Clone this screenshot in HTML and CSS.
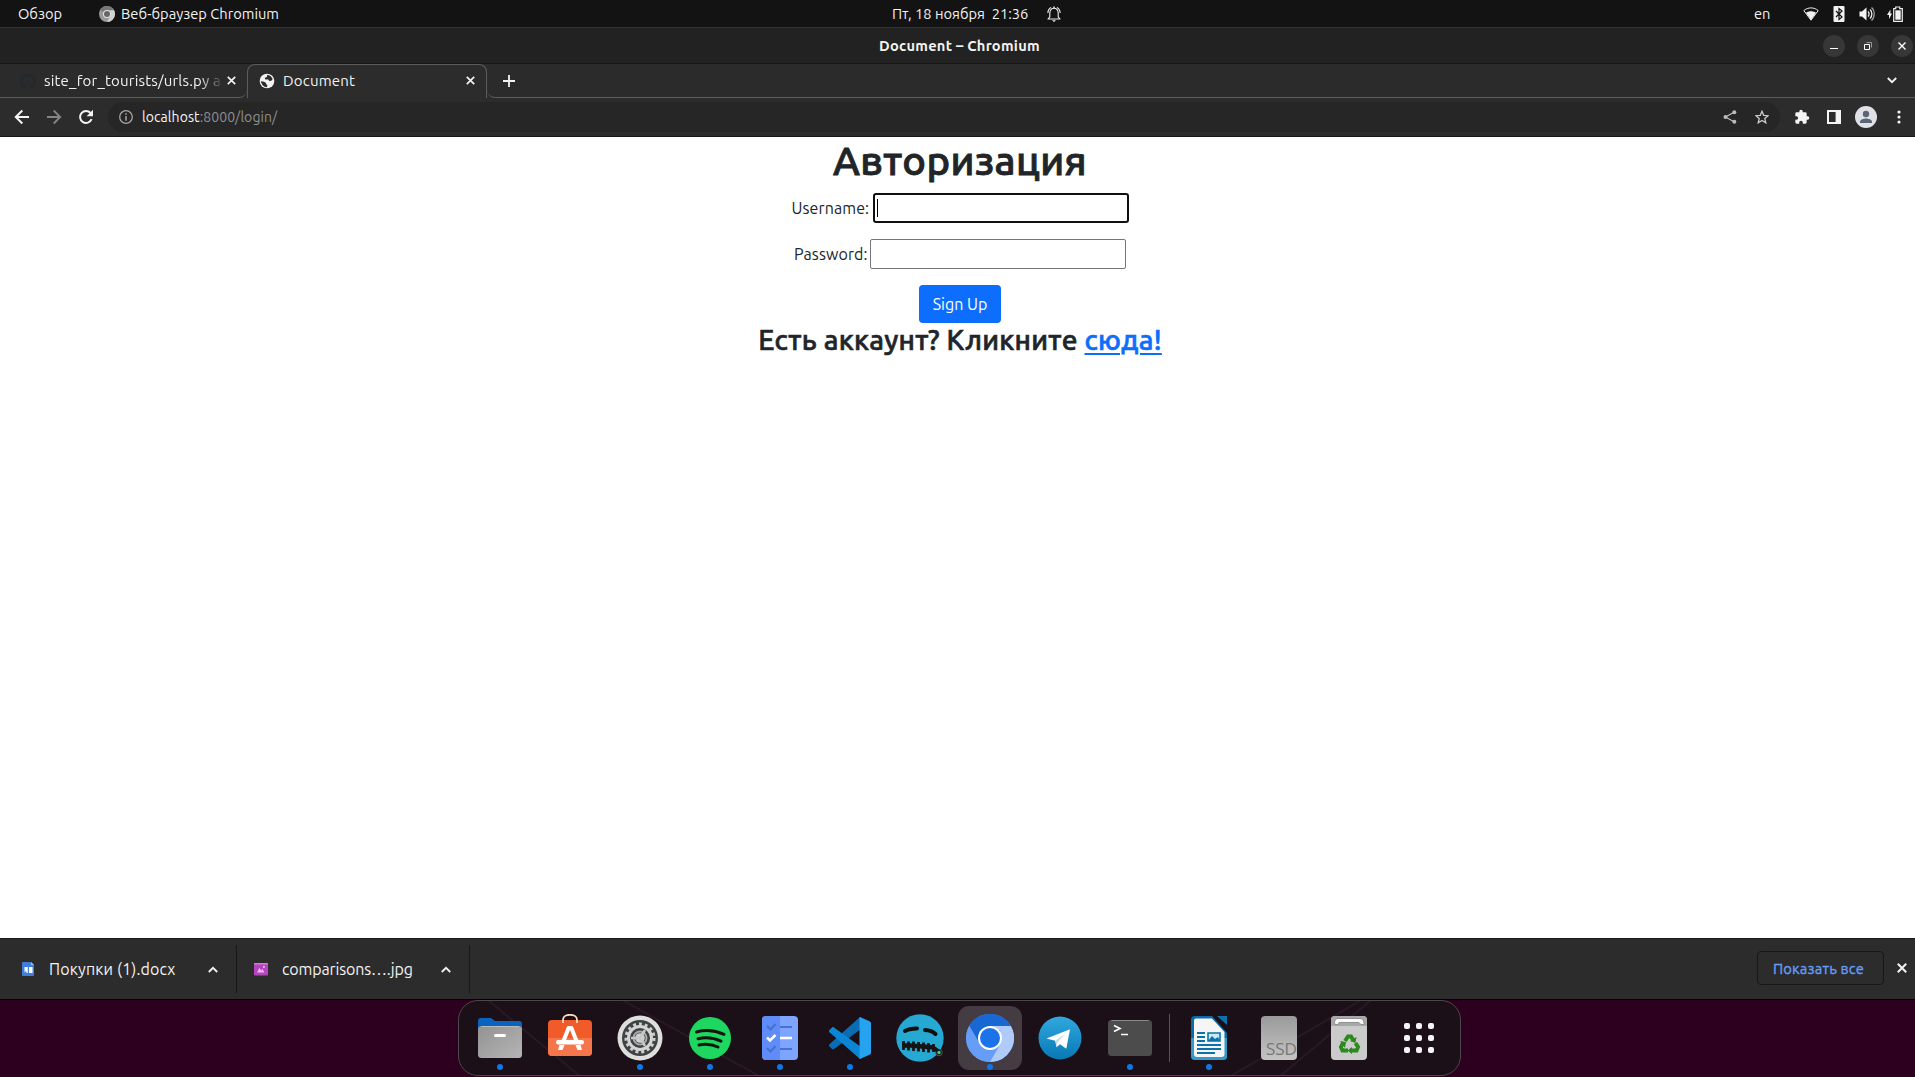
FILE: index.html
```html
<!DOCTYPE html>
<html lang="ru">
<head>
<meta charset="utf-8">
<title>Document</title>
<link rel="stylesheet" href="styles.css">
</head>
<body>
<div class="screen">
  <header class="topbar">
    <div class="top-left">
      <span class="t-overview">Обзор</span>
      <svg class="i16" viewBox="0 0 16 16"><circle cx="8" cy="8" r="8" fill="#9a9a9a"/><path d="M8 8 1.1 4A8 8 0 0 1 14.9 4H8Z" fill="#777"/><path d="M15 4.2A8 8 0 0 1 8 16l3.6-6L11.5 4.2Z" fill="#d2d2d2"/><circle cx="8" cy="8" r="4" fill="#e4e4e4"/><circle cx="8" cy="8" r="3" fill="#666"/></svg>
      <span class="t-app">Веб-браузер Chromium</span>
    </div>
    <div class="top-center">
      <span class="t-date">Пт, 18 ноября&nbsp; 21:36</span>
      <svg class="i16" viewBox="0 0 16 16" fill="none" stroke="#eee" stroke-width="1.1"><path d="M2 13h12l-1.800-2.200V7C12.200 4 10.500 2.300 8 2.300S3.800 4 3.800 7v3.800ZM1.900 7c0-2.600 1.200-4.600 3.200-5.600M14.100 7c0-2.600-1.200-4.600-3.200-5.600" stroke-linejoin="round"/><path d="M7.300 2.500V.5h1.400v2zM6 14.200h4L8 16Z" fill="#eee" stroke="none"/></svg>
    </div>
    <div class="top-right">
      <span class="t-lang">en</span>
      <svg class="i16" viewBox="0 0 16 16"><path d="M.8 4.600C5 1 11 1 15.200 4.600L8 14.200Z" fill="none" stroke="#eee" stroke-width="1"/><path d="M3 6.800c3-2 7-2 10 0L8 14Z" fill="#f2f2f2"/></svg>
      <svg class="i16" viewBox="0 0 16 16"><rect x="2.500" width="11" height="16" rx="1" fill="#f2f2f2"/><path d="m5 5 6 6-3 2.500v-11L11 5l-6 6" fill="none" stroke="#131313" stroke-width="1.200"/></svg>
      <svg class="i16" viewBox="0 0 16 16" fill="none" stroke="#eee" stroke-width="1.300"><path d="M.5 5.500H3L7.500 1.500v13L3 10.500H.5Z" fill="#f2f2f2" stroke="none"/><path d="M9 5.500c1.400 1.200 1.400 3.800 0 5M11 3.500c2.500 2.200 2.500 6.800 0 9"/><path d="M12.500 1.500c3.600 3 3.600 10 0 13" stroke="#999"/></svg>
      <svg class="i16" viewBox="0 0 16 16"><path d="M3.500 3.500 0 9h2v4l3-5.500H3.300Z" fill="#f2f2f2"/><path d="M6.700 2.700h2V1h4v1.700h2.600v12.600H6.700Z" fill="none" stroke="#eee" stroke-width="1.200"/><path d="M8.300 4.300h5.400v9.400H8.300z" fill="#f2f2f2"/></svg>
    </div>
  </header>

  <div class="titlebar">
    <span class="t-title">Document – Chromium</span>
    <div class="winbtns">
      <svg viewBox="0 0 22 22"><circle cx="11" cy="11" r="11" fill="#373737"/><path d="M7 13.500h8" stroke="#fff"/></svg>
      <svg viewBox="0 0 22 22"><circle cx="11" cy="11" r="11" fill="#373737"/><path d="M9.500 7.500h5v5" fill="none" stroke="#999"/><path d="M7.500 9.500h5v5h-5z" fill="none" stroke="#fff"/></svg>
      <svg viewBox="0 0 22 22"><circle cx="11" cy="11" r="11" fill="#373737"/><path d="m7.500 7.500 7 7m0-7-7 7" stroke="#fff" stroke-width="1.400"/></svg>
    </div>
  </div>

  <div class="tabs">
    <div class="tab tab-idle">
      <svg class="i16" viewBox="0 0 16 16"><path fill="#24292f" d="M8 0C3.580 0 0 3.580 0 8c0 3.540 2.290 6.530 5.470 7.590.4.070.55-.17.55-.38v-1.490c-2.010.37-2.530-.49-2.690-.94-.09-.23-.48-.94-.82-1.130-.28-.15-.68-.52-.01-.53.63-.01 1.080.58 1.230.82.72 1.210 1.870.87 2.330.66.07-.52.28-.87.51-1.070-1.780-.2-3.640-.89-3.640-3.950 0-.87.31-1.590.82-2.150-.08-.2-.36-1.020.08-2.120 0 0 .67-.21 2.200.82a7.500 7.500 0 0 1 4 0c1.530-1.040 2.200-.82 2.200-.82.44 1.100.16 1.920.08 2.120.51.56.82 1.270.82 2.150 0 3.070-1.870 3.750-3.650 3.950.29.25.54.73.54 1.480v2.200c0 .21.15.46.55.38A8 8 0 0 0 16 8c0-4.420-3.580-8-8-8Z"/></svg>
      <span class="t-tab1">site_for_tourists/urls.py at</span>
      <svg class="x9" viewBox="0 0 9 9"><path d="m.8.8 7.400 7.400m0-7.400L.8 8.200" stroke="#f2f2f2" stroke-width="1.700"/></svg>
    </div>
    <div class="tab tab-active">
      <svg class="i16" viewBox="0 0 24 24" fill="#f2f2f2"><circle cx="12" cy="12" r="11"/><path d="M3 12.500c2 0 4 .5 6 1.500 2.500 1.200 1 3.500 3.500 4l-.5 3.500C7 21 3.500 17.500 3 12.500ZM12 3c4 0 7 2.500 8.500 6l-2 2.500-3 .5-2-2.500-3.500.5-1.500-3L12 6Z" fill="#2c2c2c"/></svg>
      <span class="t-tab2">Document</span>
      <svg class="x9" viewBox="0 0 9 9"><path d="m.8.8 7.400 7.400m0-7.400L.8 8.200" stroke="#f2f2f2" stroke-width="1.700"/></svg>
    </div>
    <div class="tab-rest">
      <svg class="plus" viewBox="0 0 12 12"><path d="M0 6h12M6 0v12" stroke="#f2f2f2" stroke-width="1.800"/></svg>
      <svg class="chev" viewBox="0 0 10 7"><path d="m.8 1 4.200 4.200L9.200 1" fill="none" stroke="#f2f2f2" stroke-width="1.800"/></svg>
    </div>
  </div>

  <div class="toolbar">
    <svg class="nav" viewBox="0 0 16 16"><path d="M15 8H2M8.300 1.500 1.800 8l6.500 6.500" fill="none" stroke="#f5f5f5" stroke-width="2"/></svg>
    <svg class="nav" viewBox="0 0 16 16"><path d="M1 8h13M7.700 1.500 14.200 8l-6.500 6.500" fill="none" stroke="#858585" stroke-width="1.800"/></svg>
    <svg class="nav" viewBox="0 0 16 16"><path d="M13.600 10.200A6 6 0 1 1 12.600 4" fill="none" stroke="#f5f5f5" stroke-width="2"/><path d="M15 .8v6.400H8.600Z" fill="#f5f5f5"/></svg>
    <div class="urlbar">
      <svg class="i14" viewBox="0 0 14 14"><circle cx="7" cy="7" r="6.300" fill="none" stroke="#a5a5a8" stroke-width="1.300"/><path d="M7 3.200v1.500M7 6v4.700" stroke="#a5a5a8" stroke-width="1.500"/></svg>
      <span class="t-url"><b>localhost</b>:8000/login/</span>
      <svg class="i14" viewBox="0 0 14 14"><path d="M11.500 2 2.500 7l9 5" fill="none" stroke="#bbb" stroke-width="1.300"/><g fill="#bbb"><circle cx="11.300" cy="2.300" r="2"/><circle cx="2.500" cy="7" r="2"/><circle cx="11.300" cy="11.700" r="2"/></g></svg>
      <svg class="i14" viewBox="0 0 14 14"><path d="m7 1.300 1.700 4 4.400.4-3.300 2.900 1 4.200L7 10.500l-3.800 2.300 1-4.200L.9 5.700l4.400-.4Z" fill="none" stroke="#ccc" stroke-width="1.300"/></svg>
    </div>
    <div class="actions">
      <svg class="i16" viewBox="0 0 24 24"><path fill="#f5f5f5" d="M20.500 11H19V7a2 2 0 0 0-2-2h-4V3.500a2.500 2.500 0 0 0-5 0V5H4a2 2 0 0 0-2 2v3.800h1.500a2.700 2.700 0 0 1 0 5.400H2V20c0 1.100.9 2 2 2h3.800v-1.500a2.700 2.700 0 0 1 5.400 0V22H17a2 2 0 0 0 2-2v-4h1.500a2.500 2.500 0 0 0 0-5Z"/></svg>
      <svg class="i14" viewBox="0 0 14 14"><path d="M0 0h14v14H0z" fill="#f5f5f5"/><path d="M2 2h6.600v10H2z" fill="#2c2c2c"/></svg>
      <svg class="i22" viewBox="0 0 22 22"><circle cx="11" cy="11" r="11" fill="#dfe1e6"/><circle cx="11" cy="8" r="3.200" fill="#5a6577"/><path d="M5 17v-1.500c0-2 4-3.100 6-3.100s6 1.100 6 3.100V17Z" fill="#5a6577"/></svg>
      <svg class="i14" viewBox="0 0 14 14" fill="#f5f5f5"><circle cx="7" cy="2" r="1.600"/><circle cx="7" cy="7" r="1.600"/><circle cx="7" cy="12" r="1.600"/></svg>
    </div>
  </div>

  <main class="page">
    <h1>Авторизация</h1>
    <form>
      <p><label class="l-user" for="u">Username:</label><span class="field focus" id="u"><i class="caret"></i></span></p>
      <p><label class="l-pass" for="p">Password:</label><span class="field" id="p"></span></p>
      <button class="btn" type="button">Sign Up</button>
    </form>
    <h3><span>Есть аккаунт? Кликните</span> <a href="#">сюда!</a></h3>
  </main>

  <div class="downloads">
    <div class="dl dl-doc">
      <svg class="i16" viewBox="0 0 16 16"><path d="M3 1h8l3 3v10a1 1 0 0 1-1 1H3a1 1 0 0 1-1-1V2a1 1 0 0 1 1-1Z" fill="#3f7edb"/><path d="m11 1 3 3h-3z" fill="#9cc4ff"/><path d="M4.500 6h3.300v6H4.500zM9 6h3.500v6H9z" fill="#fff"/><path d="M4.500 10.500h2V12h-2z" fill="#3f7edb"/></svg>
      <span class="t-dl1">Покупки (1).docx</span>
      <svg class="up" viewBox="0 0 10 7"><path d="M.8 6 5 1.800 9.200 6" fill="none" stroke="#f2f2f2" stroke-width="1.800"/></svg>
    </div>
    <div class="dl dl-img">
      <svg class="i16" viewBox="0 0 16 16"><rect x="1" y="2" width="14" height="12.500" rx="1" fill="#b445bd"/><path d="M1 3.500V3a1 1 0 0 1 1-1h12a1 1 0 0 1 1 1v.5Z" fill="#d37bd9"/><path d="M4 11.500 6.500 7l1.800 2.500L9.500 8l2 3.500ZM10 5h1.800v1.800H10z" fill="#efb6f0"/></svg>
      <span class="t-dl2">comparisons….jpg</span>
      <svg class="up" viewBox="0 0 10 7"><path d="M.8 6 5 1.800 9.200 6" fill="none" stroke="#f2f2f2" stroke-width="1.800"/></svg>
    </div>
    <div class="dl-right">
      <div class="showall"><span>Показать все</span></div>
      <svg class="x10" viewBox="0 0 10 10"><path d="m.8.8 8.400 8.400m0-8.400L.8 9.200" stroke="#f2f2f2" stroke-width="2"/></svg>
    </div>
  </div>

  <div class="desktop">
    <div class="dock">
      <svg class="streaks" viewBox="0 0 1003 76" fill="none" stroke="#2b1727" stroke-width="2"><path d="m30 0 92 76M165 0l137 76M901 0 770 76M911 0l-91 76"/></svg>
      <div class="slot run"><svg viewBox="0 0 48 48"><defs><linearGradient id="g1" x2="1" y2="1"><stop stop-color="#929292"/><stop offset="1" stop-color="#b5b5b5"/></linearGradient></defs><path d="M5 4h10l4 3h24a3 3 0 0 1 3 3v14H2V7a3 3 0 0 1 3-3Z" fill="#0b63c0"/><rect x="2" y="12" width="44" height="32" rx="3.500" fill="url(#g1)"/><path d="M5.500 12.500h37" stroke="#bbb"/><rect x="18" y="20" width="12" height="3" rx="1.500" fill="#fff"/></svg></div>
      <div class="slot"><svg viewBox="0 0 48 48"><rect x="2" y="6" width="44" height="36" rx="4" fill="#f15a29"/><path d="M2 24h44v14a4 4 0 0 1-4 4H6a4 4 0 0 1-4-4Z" fill="#f4764a"/><path d="M17 9V6c0-7 14-7 14 0v3" fill="none" stroke="#fbdcb8" stroke-width="1.800"/><path d="m22.600 14-5.100 13M25.400 14l5.100 13" stroke="#fff" stroke-width="4"/><path d="m13.500 31-1.500 5h4.500l2-5Zm16 0 2 5H36l-1.500-5ZM21.500 12h5l1.500 4h-8Z" fill="#fff"/><rect x="10" y="26" width="28" height="4.500" rx="2.200" fill="#fff"/></svg></div>
      <div class="slot run"><svg viewBox="0 0 48 48"><circle cx="24" cy="24" r="22.500" fill="#dedede"/><circle cx="24" cy="24" r="18" fill="#3f4142"/><circle cx="24" cy="24" r="14" fill="none" stroke="#cfcfcf" stroke-width="3" stroke-dasharray="3 2.860"/><circle cx="24" cy="24" r="11.500" fill="none" stroke="#d4d4d4" stroke-width="3"/><circle cx="24" cy="24" r="6.500" fill="none" stroke="#aaa" stroke-width="2"/><circle cx="24" cy="24" r="4.800" fill="#d0d0d0"/><path d="M24 24h-9M24 24l5-8M24 24l5 8" stroke="#c8c8c8" stroke-width="2.500"/></svg></div>
      <div class="slot run"><svg viewBox="0 0 48 48"><circle cx="24" cy="24" r="21" fill="#1ed760"/><path d="M10.500 18c9.500-2.500 19-1.500 27.500 2.300M12 24.700c8-2 15.500-1.200 23 2.500M13 31c7-1.500 13-.8 19 2" fill="none" stroke="#17150f" stroke-width="3" stroke-linecap="round"/></svg></div>
      <div class="slot run"><svg viewBox="0 0 48 48"><rect x="6" y="2" width="36" height="44" rx="4" fill="#7da4ff"/><path d="M10 2h14v44H10a4 4 0 0 1-4-4V6a4 4 0 0 1 4-4Z" fill="#5f8cf8"/><path d="m11 12 3.500 3.500 5-5.500M11 34l3.500 3.500 5-5.500M24 13h12M24 35h12" stroke="#4772cf" stroke-width="2.200" fill="none"/><path d="m11 23.500 3 3 5.500-5.500M24 24h12" stroke="#fff" stroke-width="2.500" fill="none"/></svg></div>
      <div class="slot run"><svg viewBox="0 0 48 48"><path d="m34 3 1 12L8 35c-1 .6-1.500.5-2 0l-2.500-2.500c-.7-.7-.7-1.500 0-2.200Z" fill="#0a6db3"/><path d="m34 45 1-12L8 13.500c-1-.6-1.500-.5-2 0L3.500 16c-.7.700-.7 1.500 0 2.200Z" fill="#0a86d4"/><path d="m34 3 10 4.500c.7.400 1 1 1 1.500v30c0 .6-.3 1.200-1 1.500L34 45c-.7 0-.5-.5-.5-1V4c0-.5 0-1 .5-1Z" fill="#25a3ef"/></svg></div>
      <div class="slot"><svg viewBox="0 0 48 48"><circle cx="24" cy="24" r="23.700" fill="#25a9d2"/><path d="M9 17c4-2.500 8-2.500 12-2.600M29 16c4 .2 8 1.500 10.500 4" fill="none" stroke="#10100f" stroke-width="4" stroke-linecap="round"/><path d="M6.500 31.500h8l24 2" fill="none" stroke="#161514" stroke-width="4.500"/><path d="M7.500 27v9M12.500 27.500v9M17.500 27.500v9.500M22.500 28v9.500M27.500 28.500v9.500M32.500 29v9.500M37.500 30v8" stroke="#161514" stroke-width="2.800"/><circle cx="43" cy="38.500" r="3.300" fill="#161514" stroke="#555"/><path d="m38 34 4 3" stroke="#161514" stroke-width="4"/><circle cx="43" cy="38.500" r="1.700" fill="#3fd07a"/></svg></div>
      <div class="slot run sel"><svg viewBox="0 0 48 48"><circle cx="24" cy="24" r="24" fill="#669df6"/><path d="M3.200 12A24 24 0 0 1 44.800 12H24L14 30Z" fill="#1967d2"/><path d="M3.200 12 14 30l10 6 .5 12A24 24 0 0 1 3.200 12Z" fill="#669df6"/><path d="M44.800 12A24 24 0 0 1 24 48l10.400-18V12Z" fill="#aecbfa"/><path d="M24 12h20.800v4H24Z" fill="#aecbfa"/><circle cx="24" cy="24" r="12" fill="#fff"/><circle cx="24" cy="24" r="10" fill="#1a73e8"/></svg></div>
      <div class="slot"><svg viewBox="0 0 48 48"><defs><linearGradient id="g2" x2="0" y2="1"><stop stop-color="#30a8de"/><stop offset="1" stop-color="#0878b5"/></linearGradient></defs><circle cx="24" cy="24" r="21.500" fill="url(#g2)"/><path d="M10.500 24.500 34 15.300l-3.700 19.400-6.300-4.500-3.500 3-1.300-6.500Z" fill="#fff"/><path d="m19.200 26.700 10-7-7.700 8.800-.7 4.400Z" fill="#c8dcea"/></svg></div>
      <div class="slot run"><svg viewBox="0 0 48 48"><rect x="2" y="6" width="44" height="36" rx="3.500" fill="#4c4c4c"/><path d="M5.500 6.500h37" stroke="#8a8a8a"/><path d="m8 11.500 6 3-6 3M15 20.500h7" fill="none" stroke="#fff" stroke-width="1.600"/></svg></div>
      <div class="sep"></div>
      <div class="slot run"><svg viewBox="0 0 48 48"><path d="M10 2h17l15 17v23a4 4 0 0 1-4 4H10a4 4 0 0 1-4-4V6a4 4 0 0 1 4-4Z" fill="#0b6ba8"/><path d="M6 24h36v18a4 4 0 0 1-4 4H10a4 4 0 0 1-4-4Z" fill="#349ac9"/><path d="M11 4.500h16L39.500 18v22a3 3 0 0 1-3 3H12a3 3 0 0 1-3-3V6.500a2 2 0 0 1 2-2Z" fill="#f5f5f5"/><path d="M32 2h10v9Z" fill="#116fab"/><path d="M12 19h8M12 23h8M12 27h8M12 31h24M12 35h24M12 39h18" stroke="#0b71ab" stroke-width="1.800"/><path d="M23 19h12v8H23z" fill="#cce8f8" stroke="#0b71ab" stroke-width="1.600"/><path d="m23 27 4-5 3 3 3-2 2 4Z" fill="#0b71ab"/></svg></div>
      <div class="slot"><svg viewBox="0 0 48 48"><defs><linearGradient id="g3" x2="0" y2="1"><stop stop-color="#9a9a9a"/><stop offset="1" stop-color="#c4c4c4"/></linearGradient></defs><rect x="6" y="2" width="36" height="44" rx="4" fill="url(#g3)"/><text class="ssd" x="11" y="40.500" textLength="31" lengthAdjust="spacingAndGlyphs">SSD</text></svg></div>
      <div class="slot"><svg viewBox="0 0 48 48"><rect x="6" y="2" width="36" height="44" rx="4" fill="#cbcbcb"/><path d="M6 12h36V6a4 4 0 0 0-4-4H10a4 4 0 0 0-4 4Z" fill="#a8a8a8"/><path d="M10 10.500c-1-3 0-6 3-6h22c3 0 4 3 4 6h-3l-2-2H14l-1 2Z" fill="#fafafa" stroke="#777" stroke-width=".7"/><g fill="none" stroke="#2b8a1c" stroke-width="4"><path d="m20 27 3-4.500h3l2.500 4M30.500 29l2.500 4-1.500 3.500H27M23 36.500h-5.500L16 33l2-4"/></g><path d="m31.500 23-1 6-5.500-2ZM27 33v7l-4.500-3.500ZM15 27l6 1-1 6Z" fill="#2b8a1c"/></svg></div>
      <div class="slot"><svg viewBox="0 0 48 48" fill="#f5f5f5"><rect x="9" y="9" width="6" height="6" rx="2"/><rect x="21" y="9" width="6" height="6" rx="2"/><rect x="33" y="9" width="6" height="6" rx="2"/><rect x="9" y="21" width="6" height="6" rx="2"/><rect x="21" y="21" width="6" height="6" rx="2"/><rect x="33" y="21" width="6" height="6" rx="2"/><rect x="9" y="33" width="6" height="6" rx="2"/><rect x="21" y="33" width="6" height="6" rx="2"/><rect x="33" y="33" width="6" height="6" rx="2"/></svg></div>
    </div>
  </div>
</div>
</body>
</html>
```
FILE: styles.css
```css
* { box-sizing: border-box; }
html { overflow: hidden; }
body { margin: 0; width: 1915px; height: 1077px; overflow: hidden; font-family: Ubuntu, "Noto Sans", sans-serif; font-size: 14.67px; color: #f2f2f2; }
.screen { width: 1920px; height: 1077px; display: flex; flex-direction: column; background: #2c001e; }
svg { display: block; flex: none; }
span, label { white-space: nowrap; }
.i14 { width: 14px; height: 14px; }
.i16 { width: 16px; height: 16px; }
.i22 { width: 22px; height: 22px; }

.topbar { height: 28px; flex: none; background: #131313; border-bottom: 1px solid #333; display: grid; grid-template-columns: 892px 1fr 166px; align-items: center; line-height: 27px; }
.top-left { display: flex; align-items: center; padding-left: 18px; }
.t-overview { width: 81px; }
.t-app { margin-left: 6px; }
.top-center { display: flex; align-items: center; }
.t-date { width: 154px; }
.top-right { display: flex; align-items: center; gap: 12px; }
.t-lang { width: 37px; }

.titlebar { height: 36px; flex: none; background: #222; border-bottom: 1px solid #171717; display: grid; grid-template-columns: 879px 1fr 97px; align-items: center; }
.t-title { grid-column: 2; font-weight: 700; letter-spacing: .25px; }
.winbtns { display: flex; gap: 12px; }
.winbtns svg { width: 22px; height: 22px; }

.tabs { height: 34px; flex: none; background: #2b2b2b; display: flex; font-size: 15px; letter-spacing: .2px; }
.tab { display: flex; align-items: center; height: 34px; }
.tab-idle { width: 247px; border-bottom: 1px solid #5c5c5c; border-radius: 0 0 8px 0; padding-left: 20px; }
.t-tab1 { width: 176px; margin: 0 7px 0 8px; overflow: hidden; -webkit-mask-image: linear-gradient(90deg, #000 155px, transparent 180px); mask-image: linear-gradient(90deg, #000 155px, transparent 180px); }
.tab-active { width: 240px; border: 1px solid #5c5c5c; border-bottom: 0; border-radius: 8px 8px 0 0; padding: 0 0 2px 11px; background: #2c2c2c; }
.t-tab2 { width: 183px; margin-left: 8px; }
.x9 { width: 9px; height: 9px; }
.x10 { width: 10px; height: 10px; }
.tab-rest { flex: 1; display: flex; align-items: center; justify-content: space-between; border-bottom: 1px solid #5c5c5c; border-bottom-left-radius: 8px; padding: 0 23px 0 16px; }
.plus { width: 12px; height: 12px; }
.chev, .up { width: 10px; height: 7px; }

.toolbar { height: 39px; flex: none; background: #2c2c2c; border-bottom: 1px solid #171717; display: flex; align-items: center; gap: 16px; padding-left: 14px; }
.nav { width: 16px; height: 16px; }
.urlbar { width: 1672px; height: 30px; margin-left: -2px; border-radius: 15px; background: #262626; display: flex; align-items: center; padding: 0 11px; }
.t-url { flex: 1; margin-left: 9px; color: #8f8f8f; font-size: 14px; letter-spacing: .08px; }
.t-url b { font-weight: 400; color: #f5f5f5; }
.urlbar .i14:last-child { margin-left: 18px; }
.actions { display: flex; align-items: center; margin-left: -2px; }
.actions .i22 { margin: 0 14px; }
.actions > .i14:nth-child(2) { margin: 0 0 0 17px; }
.actions > .i14:last-child { margin-left: 1px; }

.page { height: 801px; flex: none; background: #fff; color: #212529; display: flex; flex-direction: column; align-items: center; }
h1, h3, p { margin: 0; font-weight: 500; }
h1 { font-size: 40px; line-height: 48px; margin-bottom: 8px; letter-spacing: .35px; -webkit-text-stroke: .9px currentColor; }
form { display: flex; flex-direction: column; align-items: center; font-size: 16px; }
p { display: flex; align-items: center; height: 30px; margin-bottom: 16px; font-weight: 400; }
label { margin-right: 5px; letter-spacing: .1px; }
.l-user { width: 76px; }
.l-pass { width: 71px; }
.field { width: 256px; height: 30px; border: 1px solid #767676; border-radius: 2px; background: #fff; display: flex; align-items: center; padding-left: 3px; }
.focus { border: 2px solid #101010; border-radius: 3px; padding-left: 2px; }
.caret { width: 1px; height: 18px; background: #000; }
.btn { width: 82px; height: 38px; border: 0; border-radius: 4px; background: #0d6efd; color: #fff; font: inherit; padding: 0; white-space: nowrap; }
h3 { font-size: 28px; line-height: 34px; white-space: nowrap; letter-spacing: .25px; -webkit-text-stroke: .65px currentColor; }
h3 a { color: #0d6efd; text-decoration: underline; text-decoration-thickness: 2px; text-underline-offset: 3px; -webkit-text-stroke-color: #0d6efd; }

.downloads { height: 62px; flex: none; background: #2c2c2c; border-top: 1px solid #1b1b1b; border-bottom: 1px solid #000; display: flex; padding-top: 6px; font-size: 16px; }
.dl { height: 48px; border-right: 1px solid #171717; display: flex; align-items: center; }
.dl-doc { width: 237px; padding-left: 20px; }
.dl-img { width: 233px; padding-left: 16px; }
.t-dl1 { width: 159px; margin-left: 13px; letter-spacing: .13px; }
.t-dl2 { width: 159px; margin-left: 13px; letter-spacing: -.13px; }
.dl-right { margin-left: auto; display: flex; align-items: center; gap: 13px; padding-right: 13px; height: 46px; }
.showall { width: 127px; height: 34px; border: 1px solid #171717; border-radius: 4px; display: flex; align-items: center; padding-left: 15px; color: #669df6; font-size: 14.67px; letter-spacing: .2px; -webkit-text-stroke: .35px currentColor; }

.desktop { height: 77px; display: flex; justify-content: center; background: #2c001e; padding-right: 1px; }
.dock { position: relative; width: 1003px; height: 76px; border: 1px solid #4d474b; border-radius: 20px; background: #1b1017; display: flex; align-items: center; padding: 0 5px 0 6px; overflow: hidden; }
.streaks { position: absolute; left: 0; top: 0; width: 1003px; height: 76px; }
.slot { flex: none; position: relative; width: 70px; height: 74px; display: flex; align-items: center; justify-content: center; }
.slot svg { position: relative; width: 48px; height: 48px; }
.ssd { font-size: 16px; fill: #777; }
.run::after { content: ""; position: absolute; left: 32px; bottom: 5px; width: 6px; height: 6px; border-radius: 50%; background: #0b77e8; }
.sel::before { content: ""; position: absolute; left: 3px; top: 5px; width: 64px; height: 64px; border-radius: 11px; background: #453b42; }
.sep { flex: none; width: 1px; height: 48px; margin: 0 4px; background: #5a5257; position: relative; }
```
